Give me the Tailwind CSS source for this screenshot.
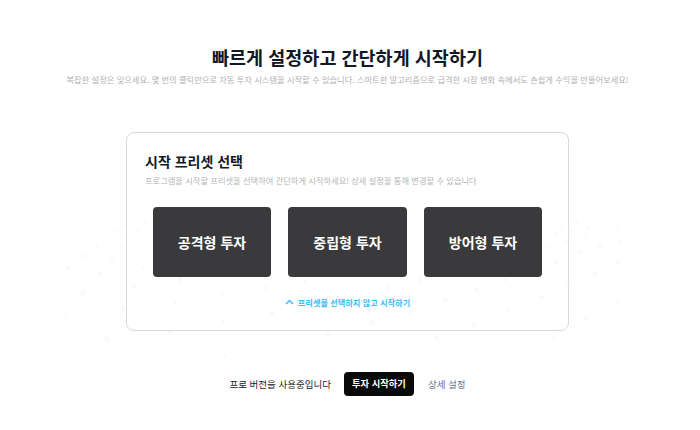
<!DOCTYPE html>
<html lang="ko">

<head>
    <meta charset="UTF-8">
    <title>Start preset</title>
    <script src="https://cdn.jsdelivr.net/npm/@tailwindcss/browser@4"></script>
</head>

<body class="bg-white font-['Noto_Sans_CJK_KR','Noto_Sans',sans-serif]">
    <div class="relative w-[700px] h-[430px] overflow-hidden">
        <!-- faint dots behind the card -->
        <svg class="absolute top-0 left-0 z-0" width="700" height="430" fill="#f9f9fa">
            <circle cx="68" cy="268" r="2" /><circle cx="83" cy="256" r="2" /><circle cx="112" cy="259" r="2" />
            <circle cx="99" cy="274" r="2" /><circle cx="83" cy="293" r="2.5" /><circle cx="97" cy="246" r="1.5" />
            <circle cx="107" cy="238" r="1.5" /><circle cx="122" cy="247" r="1.5" /><circle cx="115" cy="231" r="1.5" />
            <circle cx="95" cy="232" r="1" /><circle cx="85" cy="239" r="1" /><circle cx="73" cy="246" r="1" />
            <circle cx="123" cy="309" r="2.5" /><circle cx="107" cy="339" r="2.5" /><circle cx="65" cy="317" r="1.5" />
            <circle cx="123" cy="225" r="1.5" /><circle cx="138" cy="231" r="1.5" /><circle cx="143" cy="267" r="2" />
            <circle cx="134" cy="286" r="2.5" /><circle cx="145" cy="223" r="1.5" /><circle cx="136" cy="217" r="1.5" />
            <circle cx="175" cy="302" r="2" /><circle cx="223" cy="295" r="2" /><circle cx="180" cy="280" r="2" />
            <circle cx="223" cy="322" r="2" /><circle cx="170" cy="332" r="2.5" /><circle cx="225" cy="355" r="2" />
            <circle cx="305" cy="282" r="2" /><circle cx="266" cy="288" r="2" /><circle cx="388" cy="288" r="2" />
            <circle cx="420" cy="280" r="2" /><circle cx="477" cy="290" r="2" /><circle cx="505" cy="280" r="2" />
            <circle cx="445" cy="300" r="2.5" /><circle cx="410" cy="312" r="2" /><circle cx="509" cy="311" r="2" />
            <circle cx="540" cy="297" r="2" /><circle cx="272" cy="313" r="2.5" /><circle cx="372" cy="323" r="2.5" />
            <circle cx="474" cy="325" r="2.5" /><circle cx="353" cy="297" r="2" /><circle cx="328" cy="334" r="2.5" />
            <circle cx="437" cy="338" r="2" /><circle cx="553" cy="337" r="2.5" /><circle cx="555" cy="262" r="2" />
            <circle cx="568" cy="285" r="2" /><circle cx="577" cy="223" r="1.5" /><circle cx="572" cy="231" r="1.5" />
            <circle cx="588" cy="228" r="1.5" /><circle cx="602" cy="232" r="1.5" /><circle cx="585" cy="237" r="1.5" />
            <circle cx="618" cy="230" r="1.5" /><circle cx="619" cy="241" r="2" /><circle cx="600" cy="246" r="2" />
            <circle cx="579" cy="253" r="2" /><circle cx="618" cy="262" r="2" /><circle cx="595" cy="273" r="2.5" />
            <circle cx="617" cy="303" r="2.5" /><circle cx="586" cy="319" r="2.5" /><circle cx="556" cy="261" r="2" />
            <circle cx="566" cy="241" r="1.5" /><circle cx="547" cy="247" r="1.5" /><circle cx="556" cy="233" r="1.5" />
            <circle cx="562" cy="227" r="1.5" /><circle cx="542" cy="297" r="2" /><circle cx="635" cy="235" r="1" />
        </svg>

        <div class="relative z-10 w-[695px] flex flex-col items-center">
            <h1 class="mt-[43px] text-[18.5px] leading-[28px] font-bold text-[#111827]">빠르게 설정하고 간단하게 시작하기</h1>
            <p class="mt-[2px] text-[8.25px] leading-[12px] text-[#b0b0b0] whitespace-nowrap">복잡한 설정은 잊으세요. 몇 번의 클릭만으로 자동 투자 시스템을 시작할 수 있습니다. 스마트한 알고리즘으로 급격한 시장 변화 속에서도 손쉽게 수익을 만들어보세요!</p>

            <div class="mt-[47px] w-[443px] h-[199px] border border-[#d9d9d9] rounded-[8px] pt-[18px] pl-[18px] pr-[26px]">
                <h2 class="text-[14px] leading-[20px] font-bold text-[#111827]">시작 프리셋 선택</h2>
                <p class="mt-[3px] text-[8.25px] leading-[12px] text-[#b5b5b5]">프로그램을 시작할 프리셋을 선택하여 간단하게 시작하세요! 상세 설정을 통해 변경할 수 있습니다</p>
                <div class="mt-[21px] ml-[8px] flex gap-[17px]">
                    <div class="w-[118px] h-[70px] rounded-[4px] bg-[#3a3a3c] flex items-center justify-center text-white text-[14px] font-bold">공격형 투자</div>
                    <div class="w-[119px] h-[70px] rounded-[4px] bg-[#3a3a3c] flex items-center justify-center text-white text-[14px] font-bold">중립형 투자</div>
                    <div class="w-[118px] h-[70px] rounded-[4px] bg-[#3a3a3c] flex items-center justify-center text-white text-[14px] font-bold">방어형 투자</div>
                </div>
                <div class="mt-[18px] ml-[8px] flex items-center justify-center gap-[4px] text-[#38bdf8] text-[8.2px] leading-[14px] font-semibold">
                    <svg width="9" height="6" viewBox="0 0 9 6" fill="none" stroke="#38bdf8" stroke-width="1.5">
                        <path d="M1 5 L4.5 1.5 L8 5" />
                    </svg>
                    <span>프리셋을 선택하지 않고 시작하기</span>
                </div>
            </div>

            <div class="mt-[41px] flex items-center">
                <span class="text-[9.5px] text-[#222]">프로 버전을 사용중입니다</span>
                <button class="ml-[13px] w-[70px] h-[24px] rounded-[4px] bg-[#0a0a0a] text-white text-[9.3px] font-semibold">투자 시작하기</button>
                <span class="ml-[14px] text-[9.5px] text-[#64748b]">상세 설정</span>
            </div>
        </div>
    </div>
</body>

</html>
